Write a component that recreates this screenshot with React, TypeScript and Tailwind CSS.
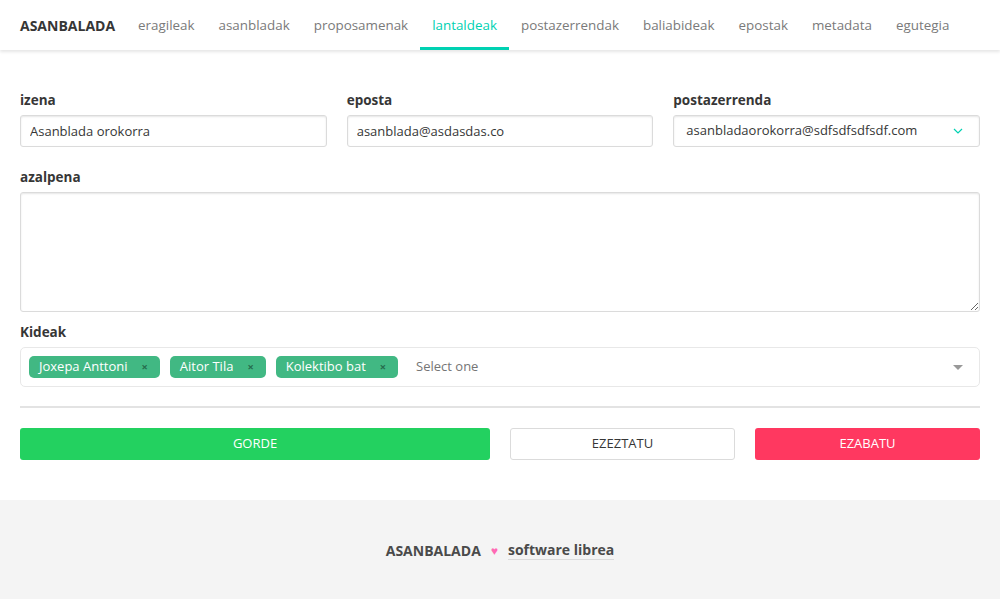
const navItems = [
  'eragileak',
  'asanbladak',
  'proposamenak',
  'lantaldeak',
  'postazerrendak',
  'baliabideak',
  'epostak',
  'metadata',
  'egutegia',
];

const members = ['Joxepa Anttoni', 'Aitor Tila', 'Kolektibo bat'];

function Field({ label, children }: { label: string; children: React.ReactNode }) {
  return (
    <div className="flex flex-col">
      <label className="text-[13.5px] font-bold text-[#363636] leading-[20px] mb-[5px]">{label}</label>
      {children}
    </div>
  );
}

const inputCls =
  'h-[32px] w-full rounded-[3px] border border-[#dbdbdb] bg-white px-[9px] text-[13px] text-[#363636] shadow-[inset_0_1px_2px_rgba(10,10,10,0.1)] outline-none';

export default function App() {
  return (
    <div className="min-h-[599px] flex flex-col bg-white text-[#4a4a4a]" style={{ fontFamily: '"Open Sans", "Noto Sans", sans-serif' }}>
      <nav className="h-[50px] flex items-stretch px-[8px] shadow-[0_2px_3px_rgba(10,10,10,0.1)] relative z-10">
        <a className="flex items-center px-[12px] mr-[-1px] text-[14px] font-bold text-[#363636]">ASANBALADA</a>
        {navItems.map((item) => (
          <a
            key={item}
            className={
              item === 'lantaldeak'
                ? 'flex items-center px-[12px] text-[13.4px] text-[#00d1b2] border-b-[3px] border-[#00d1b2] pt-[3px]'
                : 'flex items-center px-[12px] text-[13.4px] text-[#7a7a7a] border-b-[3px] border-transparent pt-[3px]'
            }
          >
            {item}
          </a>
        ))}
      </nav>

      <main className="px-[20px] pt-[40px] pb-[40px] flex flex-col">
        <div className="grid grid-cols-3 gap-x-[20px]">
          <Field label="izena">
            <input className={inputCls} defaultValue="Asanblada orokorra" />
          </Field>
          <Field label="eposta">
            <input className={inputCls} defaultValue="asanblada@asdasdas.co" />
          </Field>
          <Field label="postazerrenda">
            <div className={inputCls + ' flex items-center justify-between pr-[16px] pl-[12px]'}>
              <span>asanbladaorokorra@sdfsdfsdfsdf.com</span>
              <svg width="10" height="6" viewBox="0 0 10 6" fill="none">
                <path d="M1 1l4 4 4-4" stroke="#00d1b2" strokeWidth="1.2" />
              </svg>
            </div>
          </Field>
        </div>

        <div className="mt-[20px]">
          <Field label="azalpena">
            <textarea className="h-[120px] w-full rounded-[3px] border border-[#dbdbdb] bg-white px-[9px] py-[6px] text-[13px] shadow-[inset_0_1px_2px_rgba(10,10,10,0.1)] outline-none" />
          </Field>
        </div>

        <div className="mt-[10px]">
          <Field label="Kideak">
            <div className="h-[40px] rounded-[5px] border border-[#e8e8e8] bg-white flex items-center pl-[8px] pr-[16px]">
              <div className="flex flex-1 items-center gap-[10px]">
                {members.map((m) => (
                  <span
                    key={m}
                    className="h-[22px] flex items-center rounded-[5px] bg-[#41b883] pl-[10px] pr-[12px] text-[13px] text-white"
                  >
                    {m}
                    <span className="ml-[14px] text-[11px] font-bold text-[#266d4d]">×</span>
                  </span>
                ))}
                <span className="ml-[8px] text-[13px] text-[#757575]">Select one</span>
              </div>
              <svg width="10" height="5" viewBox="0 0 10 5">
                <path d="M0 0h10L5 5z" fill="#999" />
              </svg>
            </div>
          </Field>
        </div>

        <hr className="mt-[19px] border-0 h-[2px] bg-[#e3e3e3]" />

        <div className="mt-[20px] grid grid-cols-[470fr_225fr_225fr] gap-x-[20px]">
          <button className="h-[32px] rounded-[3px] bg-[#23d160] text-[13px] text-white">GORDE</button>
          <button className="h-[32px] rounded-[3px] border border-[#dbdbdb] bg-white text-[13px] text-[#363636]">EZEZTATU</button>
          <button className="h-[32px] rounded-[3px] bg-[#ff3860] text-[13px] text-white">EZABATU</button>
        </div>
      </main>

      <footer className="flex-1 bg-[#f4f4f4] flex items-center justify-center text-[14px] font-bold text-[#4a4a4a] pt-[2px]">
        <span>ASANBALADA</span>
        <span className="mx-[10px] text-[#ff69b4] text-[12px]">♥</span>
        <a className="border-b border-[#dbdbdb] leading-[18px]">software librea</a>
      </footer>
    </div>
  );
}
